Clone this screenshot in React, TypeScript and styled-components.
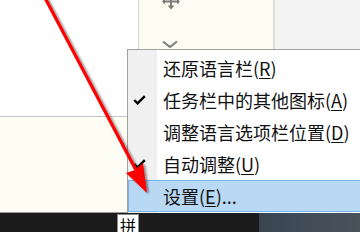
import React from "react";
import styled, { createGlobalStyle } from "styled-components";

const GlobalStyle = createGlobalStyle`
  html, body {
    margin: 0;
    padding: 0;
    background: #ffffff;
  }
  body {
    font-family: "Noto Sans CJK SC", "Noto Sans", sans-serif;
  }
`;

const Screen = styled.div`
  position: relative;
  width: 360px;
  height: 232px;
  overflow: hidden;
  display: flex;
  flex-direction: column;
`;

const Desktop = styled.div`
  height: 213px;
  display: grid;
  grid-template-rows: 49px 1fr;
`;

const TopStrip = styled.div`
  display: grid;
  grid-template-columns: 138px 137px 1fr;
`;

const BlankPane = styled.div`
  background: #ffffff;
`;

const ToolPane = styled.div`
  background: #fcfcf2;
  border-left: 1px solid #d4d4d4;
  border-right: 2px solid #dedede;
  display: flex;
  flex-direction: column;
  justify-content: space-between;
  align-items: flex-start;
  padding-left: 23px;
  padding-bottom: 1px;
`;

const GreyPane = styled.div`
  background: #f4f4f4;
`;

const Lower = styled.div`
  display: grid;
  grid-template-columns: 127px 1fr;
  overflow: hidden;
`;

const LeftColumn = styled.div`
  display: flex;
  flex-direction: column;
`;

const WhiteGap = styled.div`
  height: 67px;
  background: #ffffff;
`;

const CreamWindow = styled.div`
  flex: 1;
  background: #fdfdf4;
  border-top: 1px solid #c4c4c4;
  border-bottom: 1px solid #9a9a9a;
`;

const Menu = styled.div`
  width: 250px;
  border-top: 1px solid #a0a0a0;
  border-left: 1px solid #a0a0a0;
  padding-top: 2px;
  background: linear-gradient(to right, #f0f0f0 0, #f0f0f0 29px, #ffffff 29px);
  display: flex;
  flex-direction: column;
`;

const MenuRow = styled.div<{ $active?: boolean }>`
  height: 32px;
  display: grid;
  grid-template-columns: 29px 1fr;
  align-items: center;
  background: ${(p) => (p.$active ? "#b8d8f4" : "transparent")};
  box-shadow: ${(p) => (p.$active ? "inset 0 0 0 1px #79b4e8" : "none")};
`;

const CheckCell = styled.div`
  display: flex;
  align-items: center;
  padding-left: 5px;
`;

const Label = styled.span`
  padding-left: 6px;
  font-size: 18px;
  line-height: 32px;
  color: #111111;
  white-space: nowrap;

  u {
    text-decoration-thickness: 1px;
    text-underline-offset: 2px;
  }
`;

const Taskbar = styled.div`
  height: 19px;
  display: flex;
`;

const DarkBand = styled.div`
  width: 259px;
  background: #1b1b1b;
  display: flex;
  align-items: flex-end;
  padding-left: 117px;
  box-sizing: border-box;
`;

const SlateBand = styled.div`
  flex: 1;
  background: linear-gradient(to right, #384551, #434e59 60%, #4a525b);
`;

const ImeBox = styled.div`
  width: 22px;
  height: 18px;
  background: #ffffff;
  border: 1px solid #8a8a8a;
  border-bottom: none;
  box-sizing: border-box;
  font-size: 16px;
  line-height: 20px;
  text-align: center;
  color: #000000;
  overflow: hidden;
`;

const ArrowLayer = styled.svg`
  position: absolute;
  left: 0;
  top: 0;
  pointer-events: none;
`;

const Check = () => (
  <svg width="13" height="10" viewBox="0 0 13 10">
    <path d="M1.2 5 L4.6 8.4 L11.8 1.2" fill="none" stroke="#000" strokeWidth="2.4" />
  </svg>
);

const MoveIcon = () => (
  <svg width="18" height="10" viewBox="0 0 18 10">
    <path d="M1 1.5 H17" stroke="#7c7c7c" strokeWidth="2" />
    <path d="M0 1.5 L3 -1.5 V4.5 Z M18 1.5 L15 -1.5 V4.5 Z" fill="#7c7c7c" />
    <path d="M9 0 V6" stroke="#7c7c7c" strokeWidth="2" />
    <path d="M5.5 5.5 H12.5 L9 9.5 Z" fill="#7c7c7c" />
  </svg>
);

const Chevron = () => (
  <svg width="16" height="7" viewBox="0 0 16 7">
    <path d="M1 0.5 L8 6 L15 0.5" fill="none" stroke="#7c7c7c" strokeWidth="2" />
  </svg>
);

const items = [
  { text: "还原语言栏", key: "R", tail: "", checked: false },
  { text: "任务栏中的其他图标", key: "A", tail: "", checked: true },
  { text: "调整语言选项栏位置", key: "D", tail: "", checked: false },
  { text: "自动调整", key: "U", tail: "", checked: true },
  { text: "设置", key: "E", tail: "...", checked: false },
];

export default function App() {
  return (
    <>
      <GlobalStyle />
      <Screen>
        <Desktop>
          <TopStrip>
            <BlankPane />
            <ToolPane>
              <MoveIcon />
              <Chevron />
            </ToolPane>
            <GreyPane />
          </TopStrip>
          <Lower>
            <LeftColumn>
              <WhiteGap />
              <CreamWindow />
            </LeftColumn>
            <Menu>
              {items.map((item, i) => (
                <MenuRow key={item.key} $active={i === items.length - 1}>
                  <CheckCell>{item.checked && <Check />}</CheckCell>
                  <Label>
                    {item.text}(<u>{item.key}</u>){item.tail}
                  </Label>
                </MenuRow>
              ))}
            </Menu>
          </Lower>
        </Desktop>
        <Taskbar>
          <DarkBand>
            <ImeBox>拼</ImeBox>
          </DarkBand>
          <SlateBand />
        </Taskbar>
        <ArrowLayer width="360" height="232" viewBox="0 0 360 232">
          <defs>
            <filter id="shadow" x="-20%" y="-20%" width="140%" height="140%">
              <feDropShadow dx="2" dy="1" stdDeviation="1" floodColor="#000" floodOpacity="0.45" />
            </filter>
          </defs>
          <g filter="url(#shadow)">
            <path d="M44 -4 L137 172" stroke="#ff0000" strokeWidth="3.2" strokeLinecap="round" />
            <path d="M147 193 L126 173 L135 170 L143 163 Z" fill="#ff0000" />
          </g>
        </ArrowLayer>
      </Screen>
    </>
  );
}
